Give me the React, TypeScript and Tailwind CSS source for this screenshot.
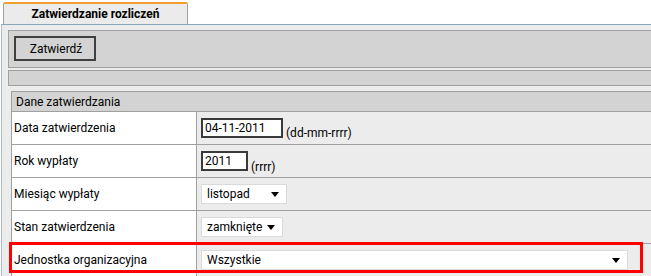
import React from 'react';

// ---------------------------------------------------------------------------
// Small form controls
// ---------------------------------------------------------------------------

function TextBox({ value, width }: { value: string; width: string }) {
  return (
    <div
      className={`${width} h-[20px] border-2 border-[#3a3a3a] bg-white px-[2px] flex items-center text-[12px] leading-none text-black`}
    >
      {value}
    </div>
  );
}

function Arrow() {
  return (
    <svg width="8" height="5" viewBox="0 0 8 5" className="shrink-0">
      <path d="M0 0 H8 L4 5 Z" fill="#000" />
    </svg>
  );
}

function Select({ value, width }: { value: string; width: string }) {
  return (
    <div
      className={`${width} h-[20px] border border-[#dadada] bg-white pl-[5px] pr-[7px] flex items-center justify-between text-[12px] leading-none text-black`}
    >
      <span>{value}</span>
      <Arrow />
    </div>
  );
}

function Row({ label, children }: { label: string; children: React.ReactNode }) {
  return (
    <div className="flex h-[33px] border-b border-[#a0a0a0]">
      <div className="w-[185px] shrink-0 bg-white border-r border-[#a0a0a0] pl-[2px] flex items-center">
        {label}
      </div>
      <div className="flex-1 pl-[4px] flex items-center">{children}</div>
    </div>
  );
}

// ---------------------------------------------------------------------------
// Page
// ---------------------------------------------------------------------------

export default function App() {
  return (
    <div
      className="relative w-[651px] h-[276px] overflow-hidden bg-white text-[12px] text-black"
      style={{ fontFamily: 'Roboto, "Liberation Sans", Arial, sans-serif' }}
    >
      {/* Tab strip */}
      <div className="h-[24px] pl-[3px] flex items-end">
        <div className="w-[185px] h-[22px] bg-[#ebebeb] border-t-2 border-[#f0a030] border-x border-x-[#a0a0a0] rounded-t-[2px] flex items-center justify-center font-bold text-[12px]">
          Zatwierdzanie rozliczeń
        </div>
      </div>

      {/* Tab body */}
      <div className="ml-[1px] h-[252px] border-t border-l border-t-[#8aa4b8] border-l-[#b0bcc6] bg-[#ececec] pl-[6px] pt-[5px]">
        {/* Toolbar */}
        <div className="h-[38px] border-y border-l border-[#a0a0a0] bg-[#d3d3d3] pl-[5px] pt-[5px]">
          <button className="w-[82px] h-[25px] border-2 border-[#404040] bg-[#d3d3d3] text-[12px] pl-[2px]">
            Zatwierdź
          </button>
        </div>

        <div className="mt-[2px] h-[16px] border-y border-l border-[#a0a0a0] bg-[#d3d3d3]" />

        {/* Section */}
        <div className="mt-[5px] ml-[3px] border-l border-[#a0a0a0]">
          <div className="h-[21px] border-y border-[#a0a0a0] bg-[#d3d3d3] pl-[4px] flex items-center">
            Dane zatwierdzania
          </div>

          <Row label="Data zatwierdzenia">
            <div className="flex items-end gap-[3px]">
              <TextBox value="04-11-2011" width="w-[82px]" />
              <span className="leading-none mb-[-1px]">(dd-mm-rrrr)</span>
            </div>
          </Row>
          <Row label="Rok wypłaty">
            <div className="flex items-end gap-[3px]">
              <TextBox value="2011" width="w-[47px]" />
              <span className="leading-none mb-[-2px]">(rrrr)</span>
            </div>
          </Row>
          <Row label="Miesiąc wypłaty">
            <Select value="listopad" width="w-[86px]" />
          </Row>
          <Row label="Stan zatwierdzenia">
            <Select value="zamknięte" width="w-[82px]" />
          </Row>
          <Row label="Jednostka organizacyjna">
            <Select value="Wszystkie" width="w-[427px]" />
          </Row>
        </div>
      </div>

      {/* Highlight frame drawn over the last row */}
      <div className="absolute left-[9px] top-[242px] w-[634px] h-[31px] border-[3px] border-[#ff0000]" />
    </div>
  );
}
